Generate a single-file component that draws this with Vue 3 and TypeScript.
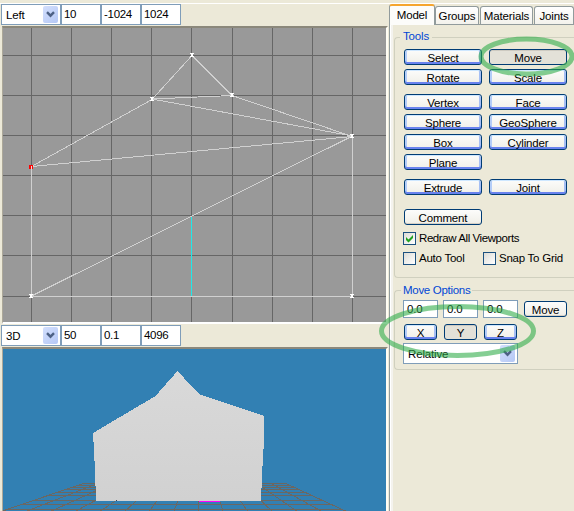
<script setup lang="ts">
interface ToolButton { label: string; pressed?: boolean; plain?: boolean }
interface ToolRow { gap: number; items: ToolButton[] }

const tabs: string[] = ['Model', 'Groups', 'Materials', 'Joints']
const views = [
  { name: 'Left', values: ['10', '-1024', '1024'] },
  { name: '3D', values: ['50', '0.1', '4096'] },
]
const toolRows: ToolRow[] = [
  { gap: 0, items: [{ label: 'Select' }, { label: 'Move', pressed: true }] },
  { gap: 4, items: [{ label: 'Rotate' }, { label: 'Scale' }] },
  { gap: 9, items: [{ label: 'Vertex' }, { label: 'Face' }] },
  { gap: 4, items: [{ label: 'Sphere' }, { label: 'GeoSphere' }] },
  { gap: 4, items: [{ label: 'Box' }, { label: 'Cylinder' }] },
  { gap: 4, items: [{ label: 'Plane' }] },
  { gap: 9, items: [{ label: 'Extrude' }, { label: 'Joint' }] },
  { gap: 14, items: [{ label: 'Comment', plain: true }] },
]
const gridX = [31, 71, 111, 151, 191, 232, 272, 312, 352]
const gridY = [55, 95, 135, 175, 215, 255, 296]
const floorY = [483, 485, 487, 489, 492, 495, 500, 504, 509]
const floorLines = Array.from({ length: 15 }, (_, i) => i - 8)
const points = [[192, 55], [152, 99], [232, 95], [352, 136], [31, 296], [352, 296]]
const leftEdge = (y: number) => 85 - (y - 483) * 3.03
const rightEdge = (y: number) => 285 + (y - 483) * 2.24
</script>

<template>
  <div class="app">
    <div class="left">
      <template v-for="(v, i) in views" :key="v.name">
        <div class="bar">
          <div class="combo"><span>{{ v.name }}</span><i class="arrow"><svg width="9" height="7" viewBox="0 0 9 7"><path d="M1 1.2 4.5 4.7 8 1.2" /></svg></i></div>
          <div v-for="n in v.values" :key="n" class="field">{{ n }}</div>
        </div>
        <div class="viewport" :class="i ? 'persp' : 'ortho'">
          <svg v-if="!i" width="383" height="294" viewBox="3 28 383 294" shape-rendering="crispEdges">
            <g class="grid">
              <path v-for="x in gridX" :key="x" :d="`M${x + .5} 28V322`" />
              <path v-for="y in gridY" :key="y" :d="`M3 ${y + .5}H386`" />
            </g>
            <path class="wire" d="M192 55.500 152 99.500 31.500 166.500 352.500 136.500 232 95.500 192 55.500M152 99 232 95.500M152 99 352.500 136M31.500 166V296.500H352.500V136L31.500 296" />
            <path class="axis" d="M191.500 217V296" />
            <g v-for="p in points" :key="p.join()" class="pt">
              <path :d="`M${p[0] - 2} ${p[1] - 2}h4v1h-1v2h1v1h-4v-1h1v-2h-1z`" />
            </g>
            <path d="M29 165h4v4h-4z" fill="#f00" /><path d="M31 166h1v3h-1z" fill="#ddd" />
          </svg>
          <svg v-else width="383" height="162" viewBox="3 349 383 162" shape-rendering="crispEdges">
            <g class="floor">
              <path v-for="n in floorLines" :key="n" :d="`M${199 + n * 14.3} 483L${198.5 + n * 24.5} 511`" />
              <path v-for="y in floorY" :key="y" :d="`M${leftEdge(y)} ${y + .5}H${rightEdge(y)}`" />
            </g>
            <defs><linearGradient id="wall" x1="0" y1="0" x2="0" y2="1"><stop stop-color="#d9d9d9" /><stop offset="1" stop-color="#d1d1d1" /></linearGradient></defs>
            <path fill="url(#wall)" d="M177.500 371 199 394 264 416V440L262 475 261 501H96L95 470 93 433 155.500 396z" />
            <path fill="#f0f" d="M199 501h21v1h-21z" /><path fill="#444" d="M116 500h1v1h-1z" />
          </svg>
        </div>
      </template>
    </div>

    <div class="right">
      <div class="tabs">
        <div v-for="(t, i) in tabs" :key="t" class="tab" :class="[{ active: !i }, t.toLowerCase()]">{{ t }}</div>
      </div>
      <div class="page">
        <section class="group tools">
          <span class="caption">Tools</span>
          <div v-for="(r, i) in toolRows" :key="i" class="row" :style="{ marginTop: r.gap + 'px' }">
            <button v-for="b in r.items" :key="b.label" :class="{ pressed: b.pressed, plain: b.plain }">{{ b.label }}</button>
          </div>
          <div class="checks">
            <label><i class="box"><svg width="9" height="9" viewBox="0 0 9 9"><path d="M1 3v3l2.500 2.500L8 4V1L3.500 5.500z" /></svg></i>Redraw All Viewports</label>
            <div class="pair"><label><i class="box"></i>Auto Tool</label><label><i class="box"></i>Snap To Grid</label></div>
          </div>
        </section>
        <section class="group options">
          <span class="caption">Move Options</span>
          <div class="coords">
            <div v-for="n in 3" :key="n" class="num">0.0</div>
            <button class="plain go">Move</button>
          </div>
          <div class="axes">
            <button>X</button><button class="pressed">Y</button><button>Z</button>
          </div>
          <div class="combo wide"><span>Relative</span><i class="arrow"><svg width="9" height="7" viewBox="0 0 9 7"><path d="M1 1.2 4.5 4.7 8 1.2" /></svg></i></div>
        </section>
      </div>
    </div>

    <svg class="marks" width="574" height="511" viewBox="0 0 574 511">
      <ellipse cx="526.5" cy="56.5" rx="45.500" ry="17.500" />
      <ellipse cx="457.5" cy="331" rx="76" ry="24.500" />
    </svg>
  </div>
</template>

<style>
body { margin: 0; overflow: hidden; }
</style>
<style scoped>
* { box-sizing: border-box; }
.app { position: relative; display: flex; width: 574px; height: 511px; overflow: hidden; background: #ece9d8; color: #000; font: 11.5px/14px "Liberation Sans", Arial, sans-serif; letter-spacing: -.15px; }
svg { display: block; }
i { font-style: normal; }
.left { width: 388px; height: 511px; padding-top: 3px; flex: none; }
.bar { display: flex; height: 23px; padding: 1px 0 0 1px; }
.left .bar:first-child { box-shadow: inset 0 1px #fff; }
.combo { display: flex; justify-content: space-between; width: 60px; height: 21px; padding: 1px 2px 1px 4px; border: 1px solid #7f9db9; background: #fff; line-height: 19px; }
.arrow { display: flex; align-items: center; justify-content: center; width: 15px; height: 17px; border-radius: 2px; background: linear-gradient(135deg, #d3dffd, #b5c8f5); }
.arrow path { fill: none; stroke: #4d6185; stroke-width: 2.4; }
.field { width: 40px; height: 21px; padding: 1px 2px; border: 1px solid #7f9db9; background: #fff; line-height: 16px; letter-spacing: -.3px; }
.viewport { width: 386px; margin-left: 2px; border: solid; border-width: 2px 2px 2px 1px; border-color: #8b887b #fffdf4 #fff #aca899; }
.ortho { height: 298px; background: #999; }
.persp { height: 164px; background: #3280b3; border-bottom: 0; }
.grid { stroke: #666; }
.axis { stroke: #1ee8e8; }
.wire { fill: none; stroke: #d0d0d0; }
.pt { fill: #fff; }
.floor { stroke: #6b6762; fill: none; }
.right { flex: 1; min-width: 0; padding-top: 3px; background: linear-gradient(#ece9d8 3px, #fff 3px 4px, #ece9d8 4px); }
.tabs { display: flex; align-items: flex-end; height: 21px; padding-left: 1px; }
.tab { flex: none; height: 18px; border: 1px solid #919b9c; border-bottom: 0; border-radius: 3px 3px 0 0; background: linear-gradient(#fff, #f3f2ec); text-align: center; line-height: 19px; }
.tab.active { position: relative; z-index: 1; width: 46px; height: 21px; margin-bottom: -1px; border-top: 2px solid #f5a52e; background: #fcfcfa; line-height: 18px; }
.groups { width: 44px; }
.materials { width: 53px; margin-left: 1px; }
.joints { width: 40px; margin-left: 1px; }
.page { height: 487px; margin-left: 1px; padding: 12px 0 0 4px; border: 1px solid #919b9c; border-width: 1px 0 0 1px; background: linear-gradient(90deg, #fff 1px, #f4f3ee 1px 3px, transparent 3px), #ece9d8; }
.group { position: relative; width: 190px; border: 1px solid #d0d0bf; border-right: 0; border-radius: 4px 0 0 4px; }
.caption { position: absolute; left: 5px; top: -9px; padding: 0 3px; background: #ece9d8; color: #0046d5; }
.options .caption { padding: 0 2px; left: 6px; top: -8px; letter-spacing: -.3px; }
.tools { height: 241px; padding: 11px 0 0 9px; }
.row { display: flex; gap: 7px; height: 16px; }
button { display: block; width: 78px; height: 16px; padding: 0; border: 1px solid #003c74; border-radius: 3px; background: linear-gradient(#fcfcfb, #f0efe8); box-shadow: inset 0 -2px #6982ee, inset 0 1px #cee7ff, inset 2px 0 #b4cdf8, inset -2px 0 #a6bff4; color: #000; font: inherit; line-height: 16px; letter-spacing: inherit; text-align: center; overflow: hidden; white-space: nowrap; }
button.plain { box-shadow: inset 0 -1px #d6d0c5; }
button.pressed { background: #e3e1d8; box-shadow: inset 0 1px #cdcac1; }
.checks { margin: 7px 0 0 -1px; }
label { display: flex; gap: 3px; align-items: center; height: 13px; line-height: 15px; letter-spacing: -.42px; white-space: nowrap; }
.box { display: flex; align-items: center; justify-content: center; flex: none; width: 13px; height: 13px; border: 1px solid #1c5180; background: linear-gradient(135deg, #dcdcd7, #fff); }
.box path { fill: #21a121; }
.pair { display: flex; margin-top: 7px; }
.pair label { width: 80px; letter-spacing: -.25px; }
.options { height: 80px; margin-top: 12px; padding: 9px 0 0 8px; }
.coords { display: flex; gap: 5px; }
.num { width: 35px; height: 18px; padding: 0 3px; border: 1px solid #7f9db9; background: #fff; line-height: 16px; }
.go { width: 43px; margin: 1px 0 0 1px; }
.axes { display: flex; gap: 7px; margin: 6px 0 3px 1px; }
.axes button { width: 33px; }
.wide { width: 115px; }
.marks { position: absolute; left: 0; top: 0; pointer-events: none; }
.marks ellipse { fill: none; stroke: #2baa45; stroke-opacity: .58; stroke-width: 5; }
</style>
